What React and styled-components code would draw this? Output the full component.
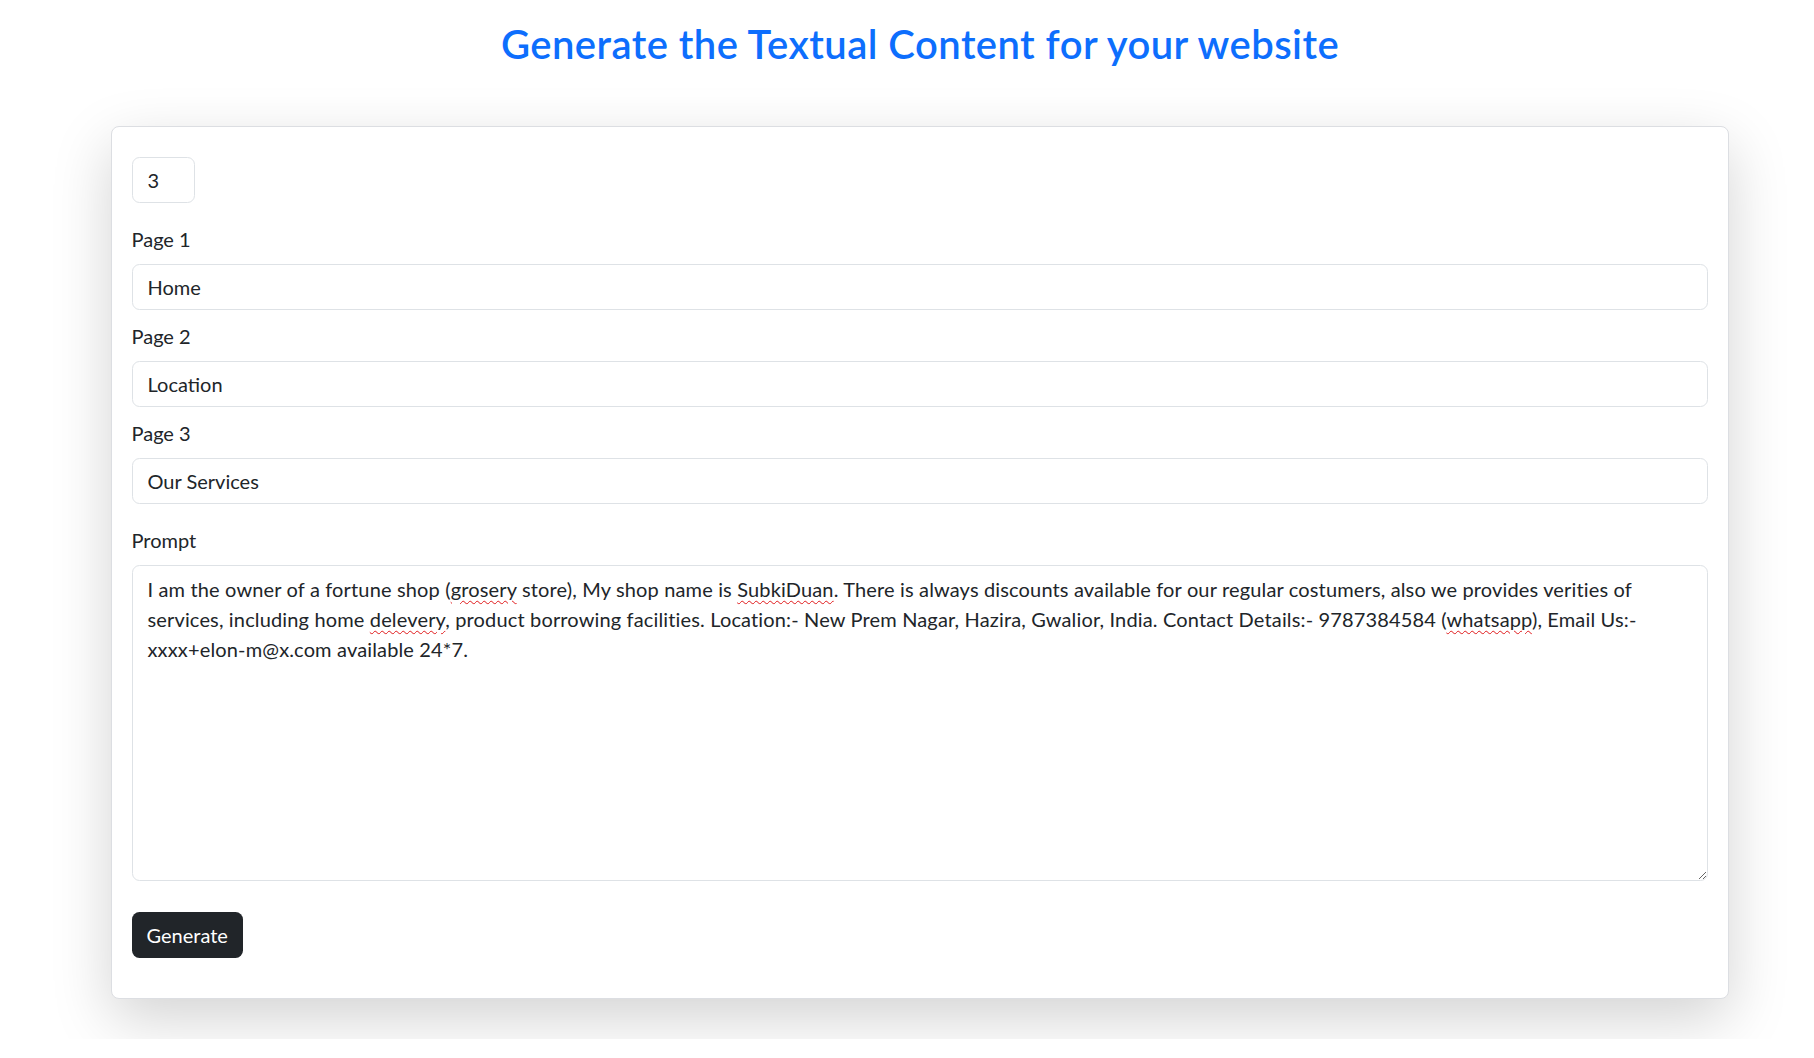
import React, { useState } from 'react';
import styled, { createGlobalStyle } from 'styled-components';

const FONT = 'Lato, "Noto Sans", sans-serif';

const GlobalStyle = createGlobalStyle`
    body {
        margin: 0;
        background: #fff;
        color: #212529;
        font-family: ${FONT};
    }
`;

const pages = ["Home", "Location", "Our Services"];

// [text, misspelled?, keep on one line?]
const promptParts = [
    ["I am the owner of a fortune shop (", false],
    ["grosery", true],
    [" store), My shop name is ", false],
    ["SubkiDuan", true],
    [". There is always discounts available for our regular costumers, also we provides verities of services, including home ", false],
    ["delevery", true],
    [", product borrowing facilities. Location:- New Prem Nagar, Hazira, Gwalior, India. Contact Details:- 9787384584 (", false],
    ["whatsapp", true],
    ["), Email Us:- ", false],
    ["xxxx+elon-m@x.com", false, true],
    [" available 24*7.", false],
];

const App = () => {
    const [count, setCount] = useState("3");
    const [values, setValues] = useState(pages);

    const changePage = (i, e) => {
        const next = [...values];
        next[i] = e.target.value;
        setValues(next);
    };

    return (
        <>
            <GlobalStyle />
            <Page>
                <Title>Generate the Textual Content for your website</Title>
                <Card>
                    <form onSubmit={(e) => e.preventDefault()}>
                        <CountInput type="text" value={count} onChange={(e) => setCount(e.target.value)} />
                        {values.map((item, i) => (
                            <div key={i}>
                                <Label>Page {i + 1}</Label>
                                <TextInput type="text" value={item} onChange={(e) => changePage(i, e)} />
                            </div>
                        ))}
                        <PromptGroup>
                            <Label>Prompt</Label>
                            <PromptBox contentEditable suppressContentEditableWarning spellCheck={false}>
                                {promptParts.map(([text, wrong, nowrap], i) =>
                                    wrong ? <Misspelled key={i}>{text}</Misspelled>
                                        : <Chunk key={i} $nowrap={nowrap}>{text}</Chunk>
                                )}
                            </PromptBox>
                        </PromptGroup>
                        <GenerateButton type="submit">Generate</GenerateButton>
                    </form>
                </Card>
            </Page>
        </>
    );
};

const Page = styled.div`
    padding: 20px 85px 40px 111px;
`;

const Title = styled.h2`
    margin: 0 0 58px;
    text-align: center;
    color: #0d6efd;
    font-size: 40px;
    font-weight: 600;
    letter-spacing: 0.45px;
    line-height: 48px;
`;

const Card = styled.div`
    border: 1px solid #dcdee2;
    border-radius: 8px;
    background: #fff;
    padding: 20px 20px 20px 19.5px;
    box-shadow: 0 20px 60px rgba(0, 0, 0, 0.175);
`;

const fieldBase = `
    box-sizing: border-box;
    display: block;
    height: 46px;
    padding: 7px 15px;
    border: 1px solid #dee2e6;
    border-radius: 7.5px;
    background: #fff;
    color: #212529;
    font-family: ${FONT};
    font-size: 20px;
    line-height: 30px;
    outline: none;
`;

const CountInput = styled.input`
    ${fieldBase}
    width: 63px;
    margin: 10px 0 21px;
`;

const TextInput = styled.input`
    ${fieldBase}
    width: 100%;
    margin: 0 0 11px;
`;

const Label = styled.label`
    display: block;
    margin-bottom: 10px;
    font-size: 20px;
    line-height: 30px;
`;

const PromptGroup = styled.div`
    margin-top: 21px;
`;

const PromptBox = styled.div`
    box-sizing: border-box;
    height: 316px;
    padding: 7.5px 15px;
    border: 1px solid #dee2e6;
    border-radius: 7.5px;
    font-size: 20px;
    letter-spacing: 0.15px;
    line-height: 30px;
    overflow: auto;
    resize: vertical;
    outline: none;
    white-space: pre-wrap;
`;

const Chunk = styled.span`
    white-space: ${(p) => (p.$nowrap ? 'nowrap' : 'pre-wrap')};
`;

const Misspelled = styled.span`
    text-decoration: underline wavy #e0191b;
    text-decoration-thickness: 1px;
    text-underline-offset: 3px;
`;

const GenerateButton = styled.button`
    display: block;
    height: 46px;
    margin: 31px 0 20px;
    padding: 0 15px;
    border: none;
    border-radius: 7.5px;
    background: #212529;
    color: #fff;
    font-family: ${FONT};
    font-size: 20px;
    line-height: 30px;
    cursor: pointer;
`;

export default App;
